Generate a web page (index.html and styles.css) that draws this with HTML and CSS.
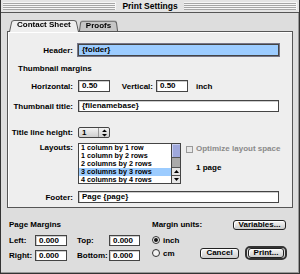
FILE: index.html
```html
<!DOCTYPE html>
<html lang="en">
<head>
    <meta charset="UTF-8">
    <title>Print Settings</title>
    <link rel="stylesheet" href="styles.css">
</head>
<body>
    <div class="window">
        <div class="titlebar">
            <span class="stripes"></span>
            <span class="title">Print Settings</span>
            <span class="stripes"></span>
        </div>
        <div class="content">
            <div class="tabs">
                <div class="tab active">Contact Sheet</div>
                <div class="tab">Proofs</div>
            </div>
            <div class="panel">
                <div class="row row-header">
                    <span class="lbl">Header:</span>
                    <div class="field wide focus"><span class="sel">{folder}</span></div>
                </div>
                <div class="heading">Thumbnail margins</div>
                <div class="row row-margins">
                    <span class="lbl">Horizontal:</span>
                    <div class="field short">0.50</div>
                    <span class="lbl2">Vertical:</span>
                    <div class="field short">0.50</div>
                    <span class="unit">inch</span>
                </div>
                <div class="row row-title">
                    <span class="lbl">Thumbnail title:</span>
                    <div class="field wide">{filenamebase}</div>
                </div>
                <div class="row row-lineheight">
                    <span class="lbl">Title line height:</span>
                    <div class="popup">
                        <span class="popup-value">1</span>
                        <span class="popup-arrows">
                            <svg width="7" height="8" viewBox="0 0 7 8"><path d="M3.5 0.5 L6 3 H1 Z M3.5 7.5 L6 5 H1 Z" fill="#000"/></svg>
                        </span>
                    </div>
                </div>
                <div class="row row-layouts">
                    <span class="lbl lbl-top">Layouts:</span>
                    <div class="listbox">
                        <ul class="list">
                            <li>1 column by 1 row</li>
                            <li>1 column by 2 rows</li>
                            <li>2 columns by 2 rows</li>
                            <li class="selected">3 columns by 3 rows</li>
                            <li>4 columns by 4 rows</li>
                        </ul>
                        <div class="scrollbar">
                            <div class="thumb"></div>
                            <div class="track"></div>
                            <div class="arrow">
                                <svg width="7" height="5" viewBox="0 0 7 5"><path d="M3.5 1 L6 4 H1 Z" fill="#000"/></svg>
                            </div>
                            <div class="arrow">
                                <svg width="7" height="5" viewBox="0 0 7 5"><path d="M3.5 4 L6 1 H1 Z" fill="#000"/></svg>
                            </div>
                        </div>
                    </div>
                    <div class="layout-side">
                        <div class="check disabled"><span class="box"></span>Optimize layout space</div>
                        <div class="pages">1 page</div>
                    </div>
                </div>
                <div class="row row-footer">
                    <span class="lbl">Footer:</span>
                    <div class="field wide">Page {page}</div>
                </div>
            </div>
            <div class="bottom">
                <div class="margins">
                    <div class="heading2">Page Margins</div>
                    <div class="margin-grid">
                        <span>Left:</span>
                        <div class="field">0.000</div>
                        <span class="col2">Top:</span>
                        <div class="field">0.000</div>
                        <span>Right:</span>
                        <div class="field">0.000</div>
                        <span class="col2">Bottom:</span>
                        <div class="field">0.000</div>
                    </div>
                </div>
                <div class="units">
                    <div class="units-top">
                        <span>Margin units:</span>
                        <button class="btn btn-vars">Variables...</button>
                    </div>
                    <div class="radio-row"><span class="radio on"></span>inch</div>
                    <div class="units-bottom">
                        <div class="radio-row"><span class="radio"></span>cm</div>
                        <button class="btn btn-cancel">Cancel</button>
                        <div class="default-ring"><button class="btn btn-print">Print...</button></div>
                    </div>
                </div>
            </div>
        </div>
    </div>
</body>
</html>
```

FILE: styles.css
```css
* {
    box-sizing: border-box;
}

body {
    margin: 0;
    font-family: "Liberation Sans", Arial, sans-serif;
    font-size: 8px;
    font-weight: bold;
    color: #000;
    background: #fff;
}

.window {
    width: 300px;
    height: 274px;
    background: #dddddd;
    border: 1px solid #333;
    border-top: none;
    box-shadow: inset -1px -1px #999;
    display: flex;
    flex-direction: column;
}

.titlebar {
    height: 13px;
    flex: none;
    display: flex;
    align-items: center;
    padding: 2px 2px 2px 2px;
    background: #e4e4e4;
    border-bottom: 1px solid #555;
}

.stripes {
    flex: 1;
    height: 8px;
    background: repeating-linear-gradient(to bottom, #f6f6f6 0 1px, #a6a6a6 1px 2px);
    border-right: 1px solid #f6f6f6;
}

.title {
    padding: 0 6px;
    font-size: 8.5px;
    line-height: 9px;
}

.content {
    flex: 1;
    padding: 6px 6px 0 6px;
}

/* tabs */
.tabs {
    display: flex;
    align-items: flex-end;
    height: 12px;
    padding-left: 2px;
    position: relative;
    z-index: 1;
}

.tab {
    position: relative;
    z-index: 1;
    height: 11px;
    line-height: 11px;
    padding: 0 7px;
}

.tab::before {
    content: "";
    position: absolute;
    inset: 0;
    background: #c6c6c6;
    border: 1px solid #555;
    border-bottom: none;
    border-radius: 3px 3px 0 0;
    transform: perspective(14px) rotateX(5deg);
    transform-origin: bottom;
    z-index: -1;
}

.tab.active {
    z-index: 2;
    height: 13px;
    line-height: 12px;
    margin-bottom: -1px;
    padding: 0 8px;
}

.tab.active::before {
    background: #eeeeee;
}

/* panel */
.panel {
    height: 177px;
    border: 1px solid #555;
    background: #eeeeee;
    box-shadow: inset 1px 1px #fff;
    padding: 12px 13px 0 0;
}

.row {
    display: flex;
    align-items: center;
}

.lbl {
    width: 65px;
    flex: none;
    text-align: right;
    margin-right: 5px;
}

.field {
    height: 12px;
    line-height: 10px;
    padding: 0 3px;
    border: 1px solid #444;
    background: #fff;
    box-shadow: inset 1px 1px #ccc;
}

.field.wide {
    flex: 1;
}

.field.short {
    width: 32px;
    flex: none;
}

.field.focus {
    background: #9cccff;
    outline: 1px solid #778;
    box-shadow: none;
}

.heading {
    margin: 8px 0 0 10px;
    line-height: 10px;
}

.row-margins {
    margin-top: 6px;
}

.lbl2 {
    width: 46px;
    text-align: right;
    padding-right: 3px;
}

.unit {
    margin-left: 8px;
}

.row-title {
    margin-top: 8px;
}

.row-lineheight {
    margin-top: 15px;
}

.popup {
    width: 32px;
    height: 11px;
    border: 1px solid #444;
    border-radius: 2px;
    background: linear-gradient(#f4f4f4, #cfcfcf);
    display: flex;
    align-items: center;
}

.popup-value {
    flex: 1;
    padding-left: 3px;
    line-height: 9px;
}

.popup-arrows {
    width: 11px;
    height: 9px;
    border-left: 1px solid #999;
    display: flex;
    align-items: center;
    justify-content: center;
}

.row-layouts {
    margin-top: 5px;
    align-items: flex-start;
}

.lbl-top {
    margin-top: 1px;
    line-height: 8px;
}

.listbox {
    width: 103px;
    height: 41px;
    flex: none;
    border: 1px solid #444;
    background: #fff;
    display: flex;
}

.list {
    flex: 1;
    list-style: none;
    margin: 0;
    padding: 0;
    font-size: 7.2px;
    line-height: 8px;
    overflow: hidden;
    white-space: nowrap;
}

.list li {
    padding-left: 2px;
}

.list li.selected {
    background: #9cccff;
}

.scrollbar {
    width: 9px;
    border-left: 1px solid #444;
    display: flex;
    flex-direction: column;
}

.thumb {
    height: 14px;
    background: #9fa8dc;
    border-bottom: 1px solid #555;
    box-shadow: inset 1px 1px #c8cef0;
}

.track {
    flex: 1;
    background: #aaaaaa;
}

.arrow {
    height: 8px;
    border-top: 1px solid #555;
    background: #e6e6e6;
    display: flex;
    align-items: center;
    justify-content: center;
}

.layout-side {
    margin-left: 5px;
    white-space: nowrap;
}

.check {
    display: flex;
    align-items: center;
    margin-top: 2px;
    line-height: 8px;
}

.check.disabled {
    color: #8a8a8a;
}

.box {
    width: 7px;
    height: 7px;
    flex: none;
    border: 1px solid #9a9a9a;
    background: #e8e8e8;
    margin-right: 3px;
}

.pages {
    margin: 10px 0 0 10px;
}

.row-footer {
    margin-top: 7px;
}

/* bottom area */
.bottom {
    display: flex;
    padding: 12px 6px 0 2px;
}

.margins {
    width: 131px;
}

.heading2 {
    line-height: 10px;
    margin-bottom: 5px;
}

.margin-grid {
    display: grid;
    grid-template-columns: 26px 32px 42px 31px;
    grid-auto-rows: 11px;
    row-gap: 4px;
    align-items: center;
}

.margin-grid .field {
    height: 11px;
    line-height: 9px;
}

.margin-grid .col2 {
    padding-left: 10px;
}

.units {
    width: 135px;
    margin-left: 12px;
}

.units-top {
    display: flex;
    justify-content: space-between;
    align-items: center;
    height: 10px;
    line-height: 10px;
}

.btn {
    font-family: inherit;
    font-size: 8px;
    font-weight: bold;
    color: #000;
    height: 10px;
    line-height: 8px;
    padding: 0;
    border: 1px solid #222;
    border-radius: 3px;
    background: linear-gradient(#f6f6f6, #cccccc);
    box-shadow: inset 1px 1px #fff;
}

.btn-vars {
    width: 53px;
    margin-right: 1px;
}

.radio-row {
    display: flex;
    align-items: center;
    height: 10px;
    margin-top: 5px;
}

.radio {
    width: 8px;
    height: 8px;
    border: 1px solid #333;
    border-radius: 50%;
    background: #f2f2f2;
    margin-right: 3px;
    display: flex;
    align-items: center;
    justify-content: center;
}

.radio.on::after {
    content: "";
    width: 4px;
    height: 4px;
    border-radius: 50%;
    background: #111;
}

.units-bottom {
    display: flex;
    align-items: center;
    height: 14px;
    margin-top: 1px;
}

.units-bottom .radio-row {
    margin-top: 0;
    flex: 1;
}

.btn-cancel {
    width: 39px;
    height: 11px;
    margin-right: 6px;
}

.default-ring {
    width: 42px;
    height: 14px;
    border: 2px solid #333;
    border-radius: 5px;
    padding: 0 1px;
    display: flex;
    align-items: center;
}

.btn-print {
    width: 100%;
    height: 10px;
}
```
